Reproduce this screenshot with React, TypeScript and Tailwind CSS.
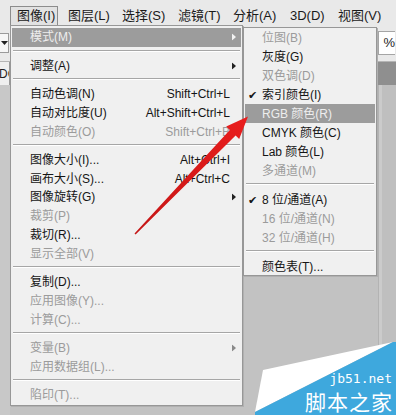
import React from 'react';

type Item =
  | { sep: true }
  | { label: string; key?: string; sub?: boolean; off?: boolean; hi?: boolean; check?: boolean; sep?: false };

const mainMenu: Item[] = [
  { label: '模式(M)', sub: true, hi: true },
  { sep: true },
  { label: '调整(A)', sub: true },
  { sep: true },
  { label: '自动色调(N)', key: 'Shift+Ctrl+L' },
  { label: '自动对比度(U)', key: 'Alt+Shift+Ctrl+L' },
  { label: '自动颜色(O)', key: 'Shift+Ctrl+B', off: true },
  { sep: true },
  { label: '图像大小(I)...', key: 'Alt+Ctrl+I' },
  { label: '画布大小(S)...', key: 'Alt+Ctrl+C' },
  { label: '图像旋转(G)', sub: true },
  { label: '裁剪(P)', off: true },
  { label: '裁切(R)...' },
  { label: '显示全部(V)', off: true },
  { sep: true },
  { label: '复制(D)...' },
  { label: '应用图像(Y)...', off: true },
  { label: '计算(C)...', off: true },
  { sep: true },
  { label: '变量(B)', sub: true, off: true },
  { label: '应用数据组(L)...', off: true },
  { sep: true },
  { label: '陷印(T)...', off: true },
];

const modeMenu: Item[] = [
  { label: '位图(B)', off: true },
  { label: '灰度(G)' },
  { label: '双色调(D)', off: true },
  { label: '索引颜色(I)', check: true },
  { label: 'RGB 颜色(R)', hi: true },
  { label: 'CMYK 颜色(C)' },
  { label: 'Lab 颜色(L)' },
  { label: '多通道(M)', off: true },
  { sep: true },
  { label: '8 位/通道(A)', check: true },
  { label: '16 位/通道(N)', off: true },
  { label: '32 位/通道(H)', off: true },
  { sep: true },
  { label: '颜色表(T)...' },
];

const font = { fontFamily: '"Liberation Sans", "Noto Sans CJK SC", sans-serif' };

function Arrow({ light, off }: { light?: boolean; off?: boolean }) {
  const c = light ? '#f2f2f2' : off ? '#8a8a8a' : '#222';
  return (
    <svg width="4" height="7" viewBox="0 0 4 7" className="absolute right-[5px] top-1/2 -translate-y-1/2">
      <path d="M0 0 L4 3.5 L0 7 Z" fill={c} />
    </svg>
  );
}

function MenuList({ items, rowH, sepH, textPl, keyPr }: { items: Item[]; rowH: string; sepH: string; textPl: string; keyPr: string }) {
  return (
    <>
      {items.map((it, i) => {
        if (it.sep) {
          return (
            <div key={i} className={`${sepH} pt-[3px] mx-[1px]`}>
              <div className="border-t border-[#a6a6a6] border-b border-b-white" />
            </div>
          );
        }
        const color = it.hi ? 'text-[#eeeeee]' : it.off ? 'text-[#9b9b9b]' : 'text-[#151515]';
        return (
          <div
            key={i}
            className={`relative flex items-center ${rowH} ${textPl} ${keyPr} ${it.hi ? 'bg-[#9c9c9c]' : ''} ${color}`}
          >
            {it.check && (
              <span className="absolute left-[3px] top-1/2 -translate-y-1/2 text-[11px] text-[#151515]">✔</span>
            )}
            <span className="whitespace-nowrap">{it.label}</span>
            <span className="flex-1" />
            {it.key && <span className="whitespace-nowrap">{it.key}</span>}
            {it.sub && <Arrow light={it.hi} off={it.off} />}
          </div>
        );
      })}
    </>
  );
}

export default function App() {
  const bar = [
    { t: '图像(I)', w: 'w-[48px]', ml: 'ml-[10px]', active: true },
    { t: '图层(L)', w: 'w-[54px]', ml: 'ml-[4px]' },
    { t: '选择(S)', w: 'w-[56px]', ml: '' },
    { t: '滤镜(T)', w: 'w-[55px]', ml: '' },
    { t: '分析(A)', w: 'w-[57px]', ml: '' },
    { t: '3D(D)', w: 'w-[48px]', ml: '' },
    { t: '视图(V)', w: 'w-[50px]', ml: '' },
  ];

  return (
    <div className="relative w-[396px] h-[415px] overflow-hidden bg-[#c2c2c2] text-[12px]" style={font}>
      {/* menu bar */}
      <div className="flex items-end h-[25px] bg-[#e9e9e9] text-[13px] text-[#1a1a1a]">
        {bar.map((b) => (
          <div
            key={b.t}
            className={`${b.w} ${b.ml} h-[19px] flex items-center pl-[6px] whitespace-nowrap ${
              b.active ? 'border border-b-0 border-[#8c8c8c] bg-[#e2e2e2]' : ''
            }`}
          >
            {b.t}
          </div>
        ))}
      </div>

      {/* options bar */}
      <div className="flex items-center justify-between h-[37px] bg-[#e9e9e9] border-b border-[#b5b5b5]">
        <div className="w-[9px] h-[20px] border border-l-0 border-[#9a9a9a] bg-[#f6f6f6] flex items-center justify-center">
          <svg width="7" height="4" viewBox="0 0 7 4">
            <path d="M0 0 L7 0 L3.5 4 Z" fill="#222" />
          </svg>
        </div>
        <div className="w-[17px] h-[24px] mr-[1px] border border-r-0 border-[#a5a5a5] bg-white flex items-center justify-end text-[13px] text-[#222]">
          %
        </div>
      </div>

      {/* document tab row */}
      <div className="flex items-stretch h-[23px] bg-[#8f8f8f]">
        <div className="w-[10px] bg-[#efefef] border-r border-[#9a9a9a] flex items-center overflow-hidden text-[12px] text-[#222]">
          <span className="-ml-[1px]">DO</span>
        </div>
      </div>

      {/* canvas area */}
      <div className="flex h-[330px]">
        <div className="w-[10px] bg-[#c8c8c8]" />
        <div className="flex-1" />
        <div className="w-[4px] bg-[#cbcbcb] border-l border-[#b3b3b3]" />
        <div className="w-[14px] bg-[#bfbfbf]" />
      </div>

      {/* Image menu */}
      <div className="absolute left-[10px] top-[25px] w-[233px] h-[381px] bg-[#f0f0f0] border border-[#979797] px-[1px] pt-[2px] shadow-[1px_1px_0_#b0b0b0]">
        <MenuList items={mainMenu} rowH="h-[18.8px]" sepH="h-[9.5px]" textPl="pl-[18px]" keyPr="pr-[11px]" />
      </div>

      {/* Mode submenu */}
      <div className="absolute left-[243px] top-[27px] w-[134px] h-[249px] bg-[#f0f0f0] border border-[#979797] px-[1px] shadow-[1px_1px_0_#b0b0b0]">
        <MenuList items={modeMenu} rowH="h-[19px]" sepH="h-[10px]" textPl="pl-[17px]" keyPr="pr-[4px]" />
      </div>

      {/* red arrow */}
      <svg className="absolute left-0 top-0 pointer-events-none" width="396" height="415" viewBox="0 0 396 415">
        <defs>
          <linearGradient id="ar" x1="135" y1="234" x2="248" y2="117" gradientUnits="userSpaceOnUse">
            <stop offset="0" stopColor="#c41616" />
            <stop offset="1" stopColor="#ea1d1d" />
          </linearGradient>
        </defs>
        <polygon
          points="134.5,233.5 135.6,234.6 235.6,135.6 239.2,139.1 248,116.5 226.2,126.5 229.8,130"
          fill="url(#ar)"
        />
      </svg>

      {/* watermark */}
      <div className="absolute right-0 bottom-0 w-[141px] h-[73px] pointer-events-none">
        <svg className="absolute inset-0" width="141" height="73" viewBox="0 0 141 73">
          <polygon points="8,28 138,0 0,70" fill="#ffffff" />
          <polygon points="0,70 138,0 141,0 141,73 0,73" fill="#3ea8dd" />
        </svg>
        <div
          className="absolute right-[4px] top-[30px] text-[13px] leading-[13px] text-white"
          style={{ fontFamily: '"DejaVu Sans Mono", monospace' }}
        >
          jb51.net
        </div>
        <div
          className="absolute right-[3px] top-[49px] text-[21px] leading-[21px] text-white tracking-[1px]"
          style={{ fontFamily: '"Noto Sans CJK SC", sans-serif' }}
        >
          脚本之家
        </div>
      </div>
    </div>
  );
}
